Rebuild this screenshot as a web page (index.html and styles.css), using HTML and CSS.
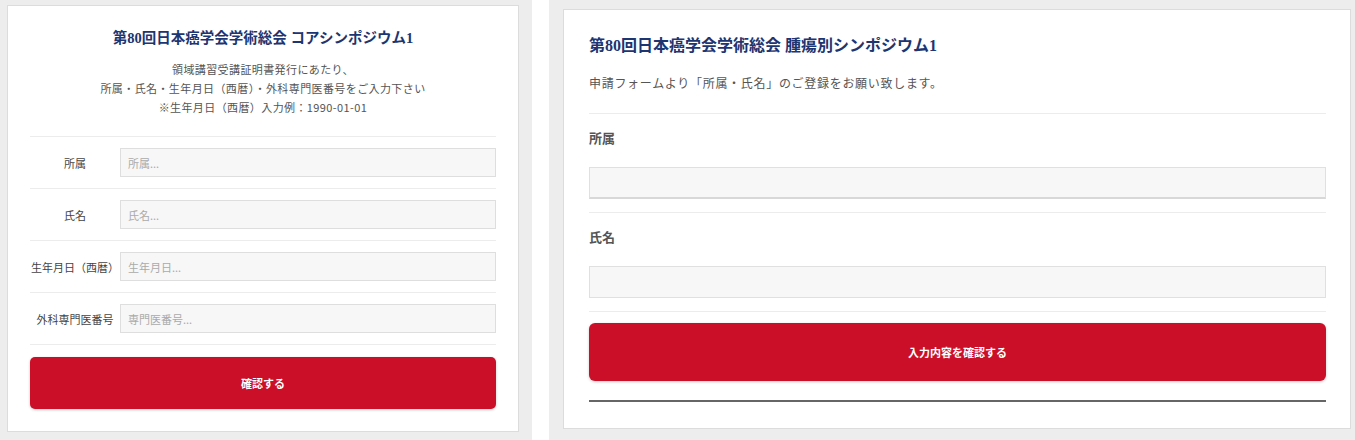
FILE: index.html
```html
<!DOCTYPE html>
<html lang="ja">
<head>
<meta charset="utf-8">
<link rel="stylesheet" href="styles.css">
</head>
<body>
<div class="page">
  <div class="pane pane-left">
    <div class="card card-left">
      <h1 class="title-left">第80回日本癌学会学術総会 コアシンポジウム1</h1>
      <p class="lead-left">領域講習受講証明書発行にあたり、<br>所属・氏名・生年月日（西暦）・外科専門医番号をご入力下さい<br>※生年月日（西暦）入力例：1990-01-01</p>
      <div class="rows">
        <div class="row"><label class="row-label">所属</label><input class="row-input" type="text" placeholder="所属..."></div>
        <div class="row"><label class="row-label">氏名</label><input class="row-input" type="text" placeholder="氏名..."></div>
        <div class="row"><label class="row-label">生年月日（西暦）</label><input class="row-input" type="text" placeholder="生年月日..."></div>
        <div class="row"><label class="row-label">外科専門医番号</label><input class="row-input" type="text" placeholder="専門医番号..."></div>
      </div>
      <button class="btn btn-left" type="button">確認する</button>
    </div>
  </div>
  <div class="strip"></div>
  <div class="pane pane-right">
    <div class="card card-right">
      <h1 class="title-right">第80回日本癌学会学術総会 腫瘍別シンポジウム1</h1>
      <p class="lead-right">申請フォームより「所属・氏名」のご登録をお願い致します。</p>
      <div class="field">
        <label class="field-label">所属</label>
        <input class="field-input field-input-active" type="text">
      </div>
      <div class="field">
        <label class="field-label">氏名</label>
        <input class="field-input" type="text">
      </div>
      <button class="btn btn-right" type="button">入力内容を確認する</button>
      <div class="rule"></div>
    </div>
  </div>
</div>
</body>
</html>
```

FILE: styles.css
```css
* { box-sizing: border-box; }
html, body { margin: 0; padding: 0; }
body {
  background: #ededed;
  font-family: "Noto Sans CJK JP", "Noto Sans", sans-serif;
  color: #555;
  width: 1355px;
  height: 440px;
  overflow: hidden;
}
.page { display: flex; height: 440px; }
.pane { background: #ededed; }
.pane-left { width: 532px; padding: 5px 0 0 7px; }
.strip { width: 17px; background: #fff; }
.pane-right { flex: 1; padding: 9px 4px 0 14px; }

.card {
  background: #fff;
  border: 1px solid #dcdcdc;
}
.card-left {
  width: 512px;
  height: 427px;
  padding: 20px 22px 0 22px;
}
.title-left {
  margin: 0;
  text-align: center;
  font-family: "Liberation Serif", "Noto Sans CJK JP", serif;
  font-weight: 700;
  font-size: 14.5px;
  line-height: 24px;
  color: #1d3570;
}
.lead-left {
  margin: 10px 0 0 0;
  text-align: center;
  font-size: 11px;
  line-height: 19px;
  letter-spacing: 0.4px;
  color: #555;
}
.rows { margin-top: 19px; border-bottom: 1px solid #ececec; }
.row {
  display: flex;
  align-items: center;
  border-top: 1px solid #ececec;
  padding: 11px 0;
}
.row-label {
  width: 90px;
  text-align: center;
  font-size: 11px;
  color: #444;
  white-space: nowrap;
}
.row-input {
  flex: 1;
  height: 29px;
  margin: 0;
  padding: 0 7px;
  background: #f7f7f7;
  border: 1px solid #dedede;
  border-radius: 0;
  font-family: inherit;
  font-size: 11px;
  color: #444;
  outline: none;
}
.row-input::placeholder { color: #aaa; }

.btn {
  display: block;
  width: 100%;
  border: none;
  background: #cc0f28;
  color: #fff;
  font-family: inherit;
  font-weight: 700;
  font-size: 11px;
  box-shadow: 0 1px 3px rgba(0,0,0,0.2);
  cursor: pointer;
}
.btn-left { margin-top: 12px; height: 52px; border-radius: 5px; }

.card-right {
  width: 788px;
  height: 420px;
  padding: 24px 24px 0 25px;
}
.title-right {
  margin: 0;
  font-family: "Liberation Serif", "Noto Sans CJK JP", serif;
  font-weight: 700;
  font-size: 16px;
  line-height: 24px;
  color: #1d3570;
}
.lead-right {
  margin: 15px 0 0 0;
  font-size: 12px;
  line-height: 20px;
  letter-spacing: 0.7px;
  color: #555;
  padding-bottom: 20px;
  border-bottom: 1px solid #ececec;
}
.field {
  padding: 14px 0 13px 0;
  border-bottom: 1px solid #ececec;
}
.field-label {
  display: block;
  font-size: 13px;
  line-height: 20px;
  font-weight: 700;
  color: #555;
}
.field-input {
  display: block;
  width: 100%;
  height: 32px;
  margin: 19px 0 0 0;
  padding: 0 8px;
  background: #f7f7f7;
  border: 1px solid #e0e0e0;
  border-radius: 0;
  font-family: inherit;
  font-size: 12px;
  outline: none;
}
.field-input-active { border-bottom: 2px solid #d8d8d8; }
.btn-right { margin-top: 11px; height: 58px; border-radius: 6px; }
.rule { margin-top: 19px; height: 2px; background: #666; }
```
